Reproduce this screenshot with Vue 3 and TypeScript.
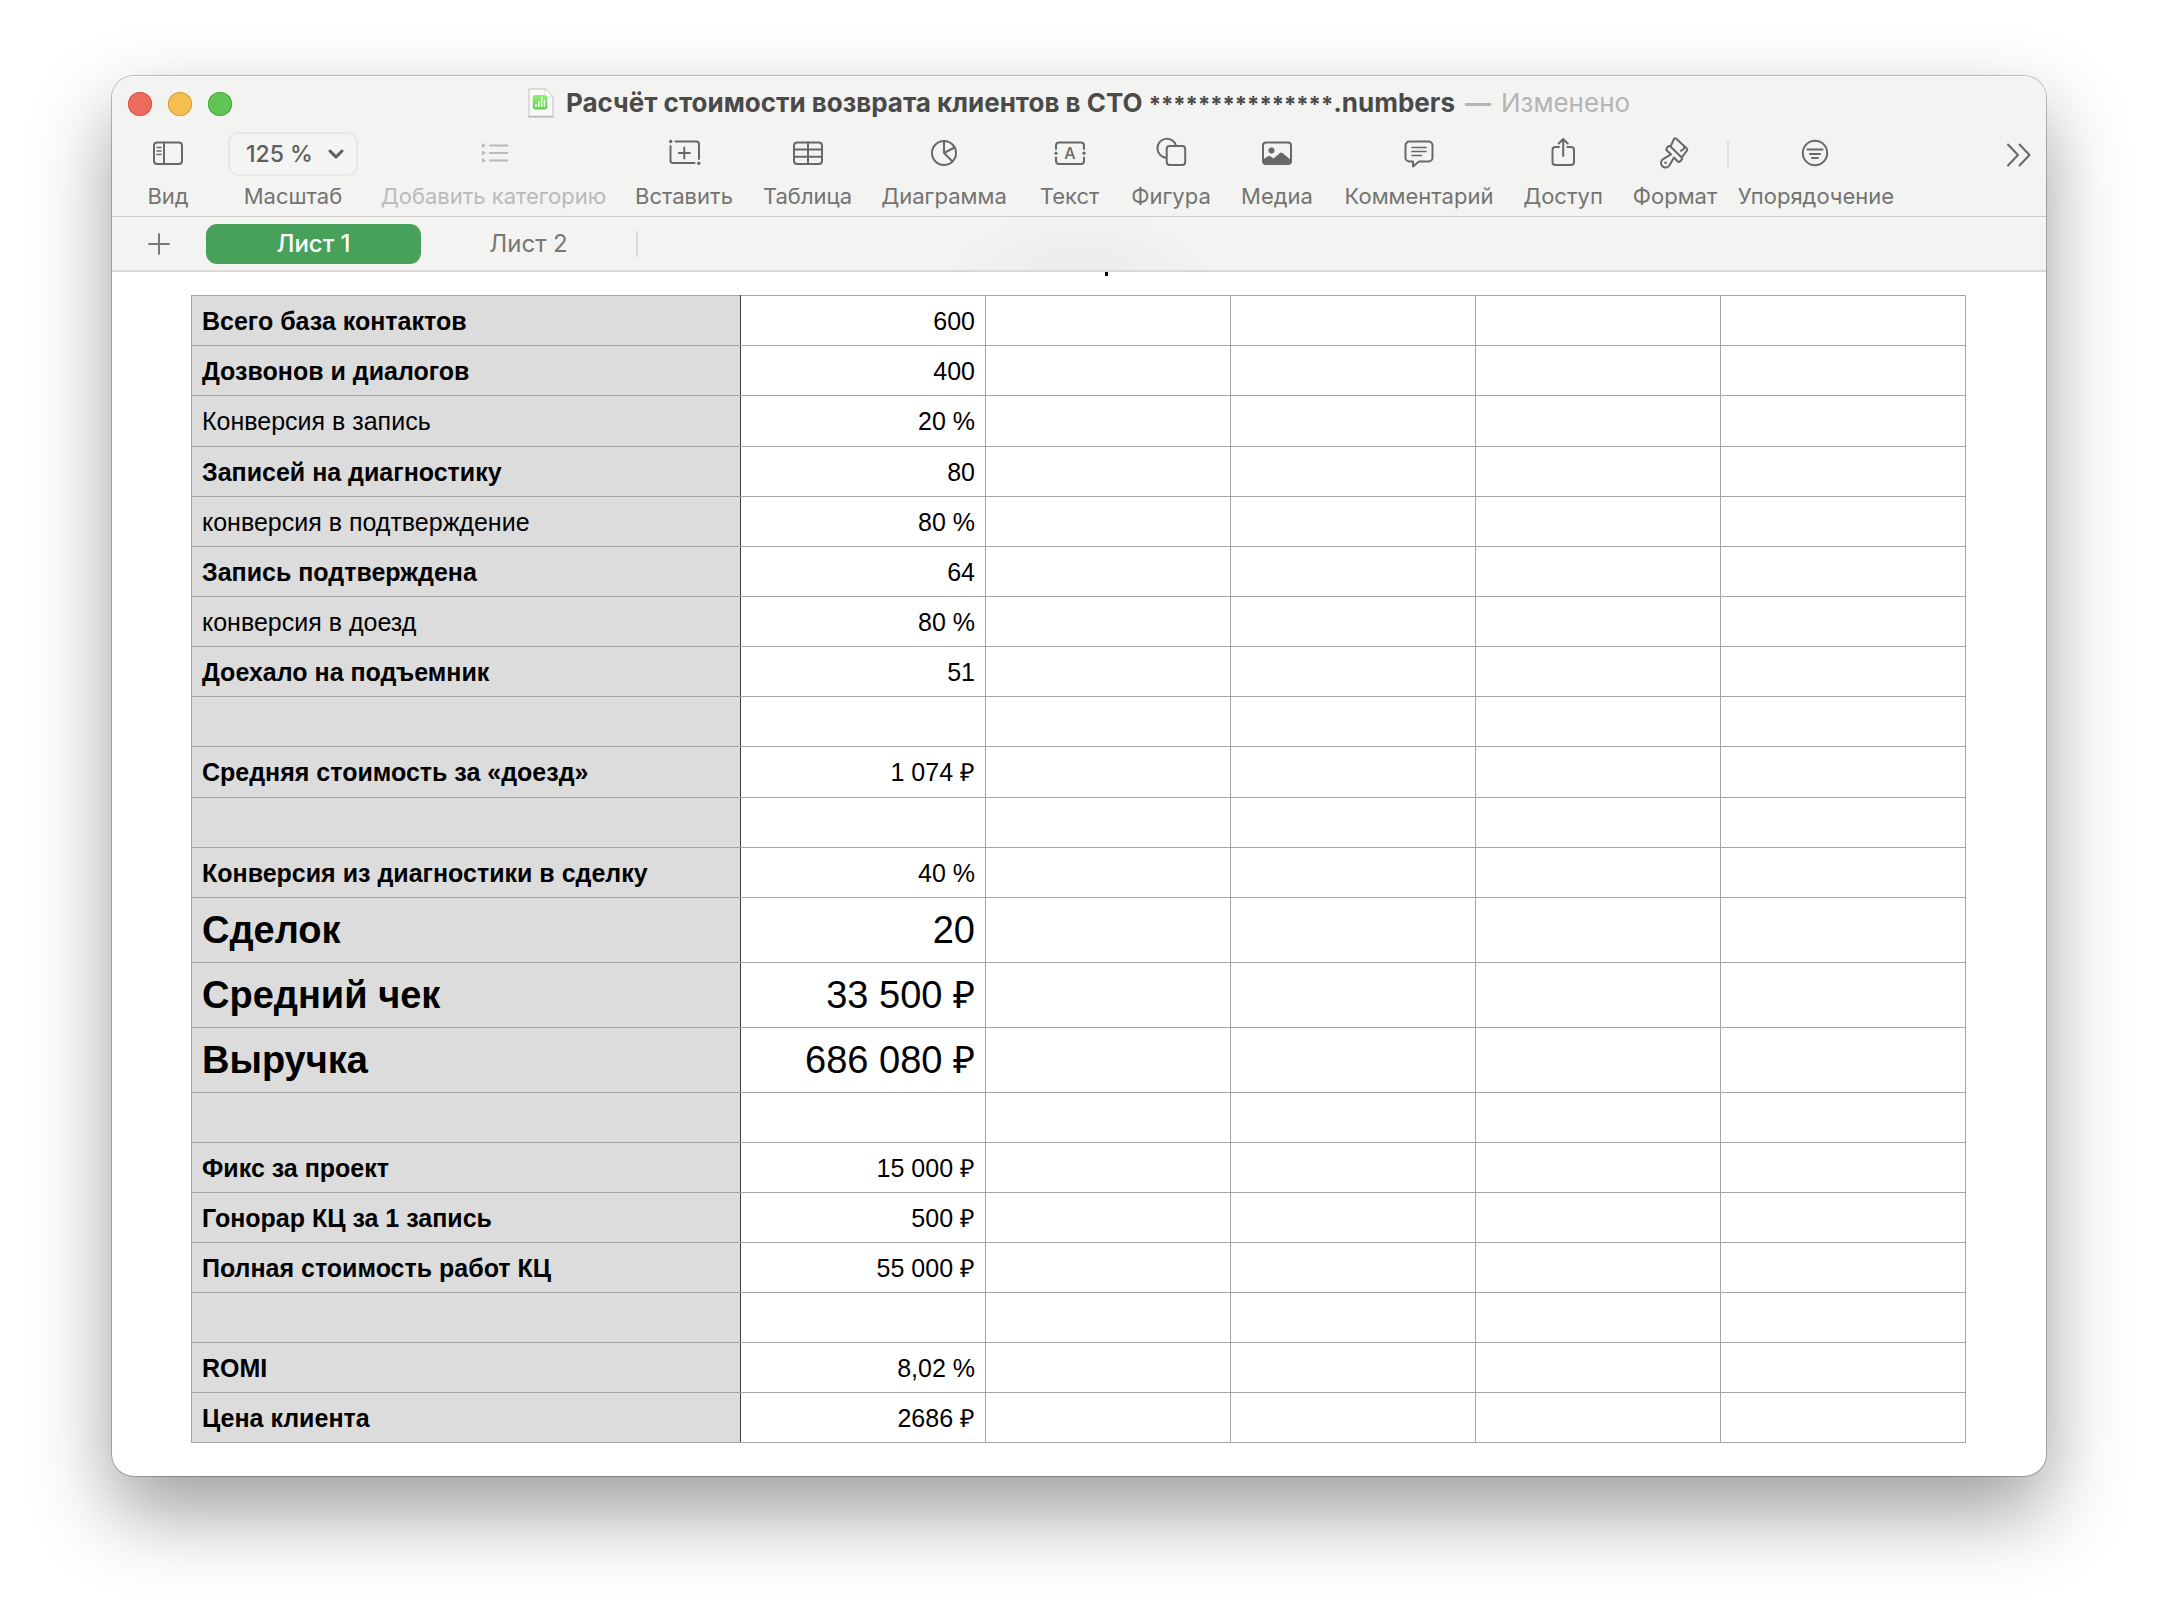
<script setup lang="ts">
import { ref } from 'vue'

type IconName =
  | 'sidebar' | 'list' | 'insert' | 'table' | 'chart' | 'text' | 'shape'
  | 'media' | 'comment' | 'share' | 'format' | 'organize'

interface Tool {
  label: string
  icon: IconName
  disabled?: boolean
}

interface Row {
  label: string
  value: string
  style?: 'plain' | 'large'
}

const zoom = ref('125 %')
const zoomLevels = ['100 %', '125 %', '150 %']
const sheets = ['Лист 1', 'Лист 2']
const activeSheet = ref('Лист 1')

const tools: Tool[] = [
  { label: 'Добавить категорию', icon: 'list', disabled: true },
  { label: 'Вставить', icon: 'insert' },
  { label: 'Таблица', icon: 'table' },
  { label: 'Диаграмма', icon: 'chart' },
  { label: 'Текст', icon: 'text' },
  { label: 'Фигура', icon: 'shape' },
  { label: 'Медиа', icon: 'media' },
  { label: 'Комментарий', icon: 'comment' },
  { label: 'Доступ', icon: 'share' },
  { label: 'Формат', icon: 'format' },
]

const rows: Row[] = [
  { label: 'Всего база контактов', value: '600' },
  { label: 'Дозвонов и диалогов', value: '400' },
  { label: 'Конверсия в запись', value: '20 %', style: 'plain' },
  { label: 'Записей на диагностику', value: '80' },
  { label: 'конверсия в подтверждение', value: '80 %', style: 'plain' },
  { label: 'Запись подтверждена', value: '64' },
  { label: 'конверсия в доезд', value: '80 %', style: 'plain' },
  { label: 'Доехало на подъемник', value: '51' },
  { label: '', value: '' },
  { label: 'Средняя стоимость за «доезд»', value: '1 074 ₽' },
  { label: '', value: '' },
  { label: 'Конверсия из диагностики в сделку', value: '40 %' },
  { label: 'Сделок', value: '20', style: 'large' },
  { label: 'Средний чек', value: '33 500 ₽', style: 'large' },
  { label: 'Выручка', value: '686 080 ₽', style: 'large' },
  { label: '', value: '' },
  { label: 'Фикс за проект', value: '15 000 ₽' },
  { label: 'Гонорар КЦ за 1 запись', value: '500 ₽' },
  { label: 'Полная стоимость работ КЦ', value: '55 000 ₽' },
  { label: '', value: '' },
  { label: 'ROMI', value: '8,02 %' },
  { label: 'Цена клиента', value: '2686 ₽' },
]
</script>

<template>
  <div class="desktop">
    <main class="window">
      <header class="titlebar">
        <div class="lights">
          <button class="light red" aria-label="Закрыть"></button>
          <button class="light yellow" aria-label="Свернуть"></button>
          <button class="light green" aria-label="Развернуть"></button>
        </div>
        <h1 class="title">
          <svg class="doc" viewBox="0 0 26 30" aria-hidden="true">
            <defs>
              <linearGradient id="docGreen" x1="0" y1="0" x2="0" y2="1">
                <stop offset="0" stop-color="#8ff075" />
                <stop offset="1" stop-color="#5fd148" />
              </linearGradient>
            </defs>
            <path d="M1.500 1H17L25 9V27.500a1 1 0 0 1-1 1H2a1 1 0 0 1-1-1V1z" fill="#fafafa" stroke="#dcdcdc" />
            <path d="M1 28.700H25" stroke="#c4c4c4" />
            <path d="M17 1V8a1 1 0 0 0 1 1H25z" fill="#fff" stroke="#d2d2d2" stroke-width="0.800" />
            <rect x="4.700" y="7" width="14.600" height="14.500" rx="3" fill="url(#docGreen)" />
            <path d="M8 18.500V16.500M10.800 18.500V14M13.600 18.500V9.500M16.400 18.500V12.500" stroke="#fff" stroke-width="1.500" />
          </svg>
          <span class="name">Расчёт стоимости возврата клиентов в СТО <span class="mask">***************</span>.numbers</span>
          <span class="dash">—</span>
          <span class="status">Изменено</span>
        </h1>
      </header>

      <div class="toolbar" role="toolbar">
        <button class="tool">
          <span class="glyph">
            <svg viewBox="0 0 36 36"><rect x="4" y="6.500" width="28" height="21.500" rx="3" /><path d="M14 6.500V28" /><path stroke-width="1.500" d="M7 11.500H11M7 15H11M7 18.500H11" /></svg>
          </span>
          <span class="caption">Вид</span>
        </button>
        <label class="tool">
          <span class="glyph">
            <span class="zoom">
              <select v-model="zoom" class="zoom-select">
                <option v-for="z in zoomLevels" :key="z">{{ z }}</option>
              </select>
              <svg class="zoom-arrow" viewBox="0 0 16 10" aria-hidden="true"><path d="M2 2L8 8L14 2" /></svg>
            </span>
          </span>
          <span class="caption">Масштаб</span>
        </label>
        <button v-for="t in tools" :key="t.icon" class="tool" :class="{ disabled: t.disabled }" :disabled="t.disabled">
          <span class="glyph">
            <svg viewBox="0 0 36 36">
              <template v-if="t.icon === 'list'">
                <path d="M14 9.500H31.500M14 17H31.500M14 24.500H31.500" />
                <path class="solid" d="M6 7L10 9.500L6 12zM6 14.500L10 17L6 19.500zM6 22L10 24.500L6 27z" />
              </template>
              <template v-else-if="t.icon === 'insert'">
                <path d="M9.500 5.500H30.500a2.500 2.500 0 0 1 2.500 2.500V23M4.500 10V24.500a2.500 2.500 0 0 0 2.500 2.500H28.500M18.300 11.500V22.500M12.800 17H23.800" />
                <circle class="solid" cx="4.700" cy="5.500" r="1.700" /><circle class="solid" cx="32.800" cy="27.200" r="1.700" />
              </template>
              <template v-else-if="t.icon === 'table'">
                <rect x="4" y="6.500" width="28" height="21.500" rx="3" /><path d="M18 6.500V28M4 13.500H32M4 20.700H32" />
              </template>
              <template v-else-if="t.icon === 'chart'">
                <circle cx="18" cy="17" r="12" /><path d="M18 5V17L28.500 11.500M18 17L26.500 25.500" />
              </template>
              <template v-else-if="t.icon === 'text'">
                <path d="M4 13V9.500a3 3 0 0 1 3-3H29a3 3 0 0 1 3 3V13M4 21.500V25a3 3 0 0 0 3 3H29a3 3 0 0 0 3-3V21.500" />
                <circle class="solid" cx="4" cy="17.200" r="1.600" /><circle class="solid" cx="32" cy="17.200" r="1.600" />
                <text class="letter" x="18" y="23" text-anchor="middle">A</text>
              </template>
              <template v-else-if="t.icon === 'shape'">
                <path d="M12.800 21.700A9.500 9.500 0 1 1 23 9.500" /><rect x="13.700" y="10" width="18.500" height="19" rx="3" />
              </template>
              <template v-else-if="t.icon === 'media'">
                <rect x="4" y="6.500" width="28" height="21.500" rx="3" /><circle class="solid" cx="12.500" cy="14.500" r="3" />
                <path class="solid" d="M4 23.500L9 20.300q1.200-.8 2.400 0L14.500 22.500L21 17q1.200-.9 2.400 0L32 24V26a2 2 0 0 1-2 2H6a2 2 0 0 1-2-2z" />
              </template>
              <template v-else-if="t.icon === 'comment'">
                <path d="M8.500 5.500H27.500a4 4 0 0 1 4 4V21.500a4 4 0 0 1-4 4H18L12 30.500V25.500H8.500a4 4 0 0 1-4-4V9.500a4 4 0 0 1 4-4z" />
                <path stroke-width="1.700" d="M11 11.500H25M11 15.500H25M11 19.500H20.500" />
              </template>
              <template v-else-if="t.icon === 'share'">
                <path d="M14 11H10.500a3 3 0 0 0-3 3V26a3 3 0 0 0 3 3H26a3 3 0 0 0 3-3V14a3 3 0 0 0-3-3H22.500M18.200 20V3M13.700 7.500L18.200 3L22.700 7.500" />
              </template>
              <template v-else-if="t.icon === 'format'">
                <path d="M13.500 10.500L17 3q.7-1.500 2-.4L29.800 12.600q1 1 .1 2.100L24.700 21.500" />
                <path d="M13.500 10.500q-1.500-1-2.700.3l-1 1.200q-1 1.500.2 2.700L14 18.300L6.500 22.800a4.600 4.600 0 1 0 6.300 6L17 21.500L20.500 25.300q1.500 1.200 2.700 0l1.500-1.500q1-1.200 0-2.300z" />
                <path d="M27.300 11Q27 14 23.800 14.800" />
                <circle class="solid" cx="8.500" cy="26.700" r="1.300" />
              </template>
            </svg>
          </span>
          <span class="caption">{{ t.label }}</span>
        </button>
        <span class="separator"></span>
        <button class="tool">
          <span class="glyph">
            <svg viewBox="0 0 36 36"><circle cx="17" cy="17" r="12.200" /><path d="M9.500 13.500H24.500M12 18H22M14 22H20" /></svg>
          </span>
          <span class="caption">Упорядочение</span>
        </button>
        <button class="more" aria-label="Ещё">
          <svg viewBox="0 0 26 24"><path d="M2 1.500L12 12L2 22.500M13.500 1.500L23.500 12L13.500 22.500" /></svg>
        </button>
      </div>

      <nav class="tabs">
        <button class="add" aria-label="Добавить лист">
          <svg viewBox="0 0 22 22"><path d="M11 1V21M1 11H21" /></svg>
        </button>
        <button
          v-for="s in sheets"
          :key="s"
          class="tab"
          :class="{ active: s === activeSheet }"
          @click="activeSheet = s"
        >{{ s }}</button>
        <span class="tab-divider"></span>
      </nav>

      <section class="sheet">
        <div class="scrolled-heading"></div>
        <table class="grid">
          <colgroup>
            <col class="col-label" />
            <col v-for="n in 5" :key="n" />
          </colgroup>
          <tbody>
            <tr v-for="(r, i) in rows" :key="i" :class="r.style">
              <th scope="row">{{ r.label }}</th>
              <td>{{ r.value }}</td>
              <td></td>
              <td></td>
              <td></td>
              <td></td>
            </tr>
          </tbody>
        </table>
      </section>
    </main>
  </div>
</template>

<style>
body {
  margin: 0;
  background: #fff;
}
</style>

<style scoped>
.desktop {
  box-sizing: border-box;
  min-height: 100vh;
  padding: 76px 112px 148px;
  font-family: Inter, "Noto Sans", sans-serif;
  overflow: hidden;
}

.window {
  background: #fff;
  border-radius: 22px;
  overflow: hidden;
  box-shadow: 0 0 0 1px rgba(0, 0, 0, 0.24), 0 36px 80px rgba(0, 0, 0, 0.39);
}

button {
  margin: 0;
  padding: 0;
  border: 0;
  background: none;
  font: inherit;
  color: inherit;
}

svg {
  fill: none;
  stroke: currentColor;
  stroke-width: 2;
  stroke-linecap: round;
  stroke-linejoin: round;
}

.solid {
  fill: currentColor;
  stroke: none;
}

.titlebar {
  display: grid;
  grid-template-columns: 1fr auto 1fr;
  align-items: center;
  height: 56px;
  padding: 0 16px;
  background: #f3f3f2;
  box-shadow: inset 0 1px #fbfbfa;
}

.lights {
  display: flex;
  gap: 16px;
}

.light {
  width: 24px;
  height: 24px;
  border-radius: 50%;
}

.red {
  background: #ed6a5f;
  box-shadow: inset 0 0 0 1px #d5564c;
}

.yellow {
  background: #f5bf4f;
  box-shadow: inset 0 0 0 1px #d8a03e;
}

.green {
  background: #61c554;
  box-shadow: inset 0 0 0 1px #4ea73f;
}

.title {
  display: flex;
  align-items: center;
  margin: 0 0 2px;
  font-size: 26px;
  line-height: 32px;
  font-weight: 700;
  color: #4a4a49;
  white-space: nowrap;
}

.doc {
  width: 26px;
  height: 30px;
  margin-right: 12px;
  stroke: none;
}

.mask {
  font-size: 22px;
}

.dash,
.status {
  margin-left: 10px;
  font-weight: 400;
  color: #b5b5b4;
}

.dash {
  font-weight: 700;
}

.toolbar {
  display: grid;
  grid-template-columns: 112px 138px 263px 118px 129px 144px 107px 96px 116px 168px 120px 104px 2px 174px 1fr;
  height: 84px;
  background: #f3f3f2;
  border-bottom: 1px solid #cbcbca;
  color: #686866;
}

.tool {
  display: flex;
  flex-direction: column;
  align-items: center;
  gap: 6px;
}

.tool.disabled {
  color: #bababa;
}

.glyph {
  display: flex;
  align-items: center;
  height: 44px;
}

.glyph > svg {
  width: 36px;
  height: 36px;
}

.caption {
  font-size: 22px;
  line-height: 28px;
  white-space: nowrap;
  color: #737371;
}

.disabled .caption {
  color: #bababa;
}

.letter {
  font-size: 16px;
  font-weight: 500;
  fill: currentColor;
  stroke: none;
}

.zoom {
  display: grid;
  align-items: center;
  width: 130px;
  height: 44px;
}

.zoom-select {
  grid-area: 1 / 1;
  box-sizing: border-box;
  width: 100%;
  height: 100%;
  padding: 0 0 0 16px;
  border: 2px solid #e7e7e6;
  border-radius: 10px;
  background: #f4f4f3;
  appearance: none;
  font: 500 23px/28px Inter, "Noto Sans", sans-serif;
  color: #5e5e5c;
}

.zoom-arrow {
  grid-area: 1 / 1;
  justify-self: end;
  width: 16px;
  height: 10px;
  margin-right: 14px;
  stroke-width: 3;
  color: #5e5e5c;
  pointer-events: none;
}

.separator {
  height: 28px;
  margin-top: 8px;
  background: #e2e2e1;
}

.more {
  justify-self: end;
  align-self: start;
  height: 44px;
  margin-right: 14px;
}

.more svg {
  display: block;
  width: 26px;
  height: 24px;
  margin-top: 2px;
}

.tabs {
  display: flex;
  align-items: center;
  height: 53px;
  padding-left: 36px;
  border-bottom: 2px solid #d9d9d7;
  background: radial-gradient(ellipse 140px 60px at 50% 100%, #ececeb, #f3f3f2) #f3f3f2;
}

.add {
  width: 22px;
  height: 22px;
  margin-right: 36px;
  color: #787876;
}

.add svg {
  display: block;
}

.tab {
  width: 215px;
  height: 40px;
  border-radius: 11px;
  font-size: 24px;
  line-height: 30px;
  color: #777775;
}

.tab.active {
  background: #48a15a;
  color: #fff;
  font-weight: 500;
}

.tab-divider {
  width: 2px;
  height: 26px;
  background: #dcdcdb;
}

.sheet {
  padding: 0 80px 33px 79px;
}

/* Descender of the heading that has scrolled under the tab bar. */
.scrolled-heading {
  width: 3px;
  height: 4px;
  margin: 0 0 19px calc(50% + 26px);
  background: #000;
}

.grid {
  width: 100%;
  table-layout: fixed;
  border-collapse: collapse;
  font-family: "Liberation Sans", Arial, sans-serif;
  font-size: 25px;
  line-height: 28px;
  color: #000;
}

.col-label {
  width: 549px;
}

.grid tr {
  height: 50px;
}

.grid tr:nth-child(-7n + 10) {
  height: 51px;
}

.grid tr.large {
  height: 65px;
  font-size: 38px;
  line-height: 44px;
}

.grid th,
.grid td {
  box-sizing: border-box;
  padding: 0 10px;
  border: 1px solid #a5a5a5;
  white-space: nowrap;
}

.grid th {
  background: #dcdcdc;
  border-right-color: #3f3f3f;
  text-align: left;
  font-weight: 700;
}

.grid tr.plain th {
  font-weight: 400;
}

.grid td {
  text-align: right;
}
</style>
